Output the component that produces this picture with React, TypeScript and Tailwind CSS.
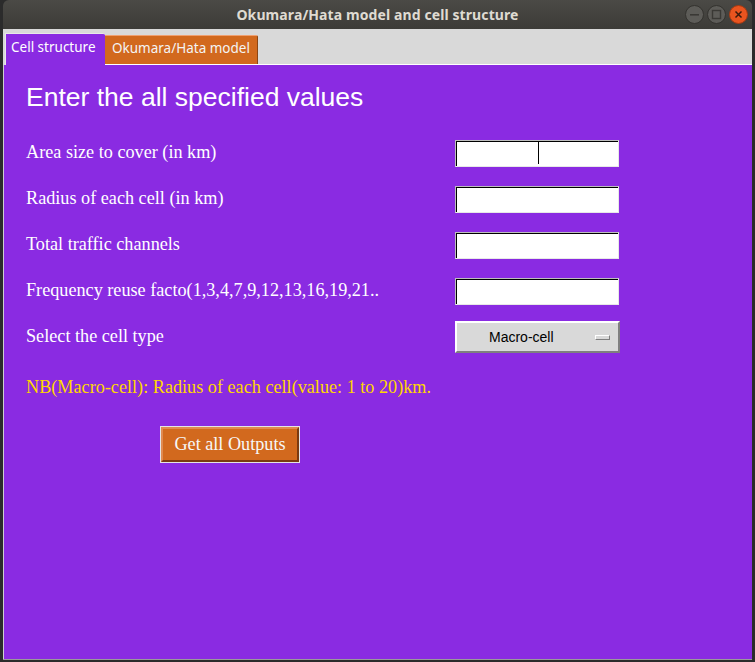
import React from "react";

const rows = [
  "Area size to cover (in km)",
  "Radius of each cell (in km)",
  "Total traffic channels",
  "Frequency reuse facto(1,3,4,7,9,12,13,16,19,21..",
];

function Entry({ focused }: { focused?: boolean }) {
  return (
    <div className="h-[27px] w-[164px] border border-t-[#bdbdbd] border-l-[#bdbdbd] border-b-[#e8e8e8] border-r-[#e8e8e8]">
      <div className="relative h-full w-full bg-white border-t border-l border-black">
        {focused && <div className="absolute left-[81px] top-0 h-[22px] w-px bg-black" />}
      </div>
    </div>
  );
}

function WindowButtons() {
  return (
    <div className="absolute right-[4px] top-[5px] flex gap-[3px]">
      <svg width="19" height="19" viewBox="0 0 19 19">
        <circle cx="9.5" cy="9.5" r="9" fill="#5d5c58" stroke="#34332f" />
        <rect x="5" y="9" width="9" height="1.6" fill="#3a3935" />
      </svg>
      <svg width="19" height="19" viewBox="0 0 19 19">
        <circle cx="9.5" cy="9.5" r="9" fill="#5d5c58" stroke="#34332f" />
        <rect x="5.5" y="5.5" width="8" height="8" fill="none" stroke="#3a3935" strokeWidth="1.4" />
      </svg>
      <svg width="19" height="19" viewBox="0 0 19 19">
        <circle cx="9.5" cy="9.5" r="9" fill="#e9541f" stroke="#a63a12" />
        <path d="M6.5 6.5 L12.5 12.5 M12.5 6.5 L6.5 12.5" stroke="#3b1a0c" strokeWidth="1.5" />
      </svg>
    </div>
  );
}

export default function App() {
  return (
    <div className="h-[662px] w-[755px] overflow-hidden bg-[#2b2b2b]">
      <div className="ml-[3px] w-[749px] flex flex-col">
        {/* title bar */}
        <div className="relative h-[29px] rounded-t-[6px] bg-gradient-to-b from-[#4b4a46] to-[#3c3b37] flex items-center justify-center">
          <span className="font-['Noto_Sans',sans-serif] text-[14px] font-bold text-[#dfdbd2] tracking-[0.1px]">
            Okumara/Hata model and cell structure
          </span>
          <WindowButtons />
        </div>

        {/* tabs */}
        <div className="h-[36px] bg-[#d9d9d9] flex items-end pl-[2px] font-['Noto_Sans',sans-serif] text-[13.5px]">
          <div className="h-[32px] w-[100px] bg-[#8a2be2] rounded-tr-[2px] border-t border-l border-[#e8e8e8] pl-[5px] pt-[3px] text-white">
            Cell structure
          </div>
          <div className="flex flex-1 flex-col">
            <div className="flex">
              <div className="h-[29px] w-[153px] bg-[#d2691e] rounded-tr-[2px] border-t border-[#f0a070] border-r border-r-[#8b4513] pl-[7px] pt-[2px] text-[#f4f4f4]">
                Okumara/Hata model
              </div>
            </div>
            <div className="h-px bg-white" />
          </div>
        </div>

        {/* content */}
        <div className="h-[594px] bg-[#8a2be2] border-l border-[#cfcfcf] pl-[22px] pt-[17px]">
          <h1 className="font-['Liberation_Sans',Arial,sans-serif] text-[26.5px] leading-[30px] text-white">
            Enter the all specified values
          </h1>
          <div className="mt-[18px] flex flex-col font-['Liberation_Serif','Times_New_Roman',serif] text-[18.2px] text-white">
            {rows.map((label, i) => (
              <div key={label} className="h-[46px] grid grid-cols-[429px_164px] items-center">
                <span>{label}</span>
                <Entry focused={i === 0} />
              </div>
            ))}
            <div className="h-[46px] grid grid-cols-[429px_165px] items-center">
              <span>Select the cell type</span>
              <div className="relative h-[32px] bg-[#d9d9d9] border-2 border-t-white border-l-white border-b-[#7f7f7f] border-r-[#7f7f7f] flex items-center pl-[32px] font-['Liberation_Sans',Arial,sans-serif] text-[14px] text-black">
                Macro-cell
                <div className="absolute right-[8px] top-[12px] h-[5px] w-[15px] bg-[#d9d9d9] border border-t-white border-l-white border-b-[#7f7f7f] border-r-[#7f7f7f]" />
              </div>
            </div>
          </div>
          <p className="mt-[16px] font-['Liberation_Serif','Times_New_Roman',serif] text-[18.2px] leading-[22px] text-[#ffd700]">
            NB(Macro-cell): Radius of each cell(value: 1 to 20)km.
          </p>
          <div className="mt-[28px] ml-[134px] w-[140px] h-[37px] border border-[#e4e4e4]">
            <button
              type="button"
              className="h-full w-full bg-[#d2691e] border-2 border-t-[#e08a50] border-l-[#e08a50] border-b-[#7a3a10] border-r-[#7a3a10] font-['Liberation_Serif','Times_New_Roman',serif] text-[18.2px] text-[#f7f7f7]"
            >
              Get all Outputs
            </button>
          </div>
        </div>
        <div className="h-px bg-[#9a9a9a]" />
      </div>
    </div>
  );
}
